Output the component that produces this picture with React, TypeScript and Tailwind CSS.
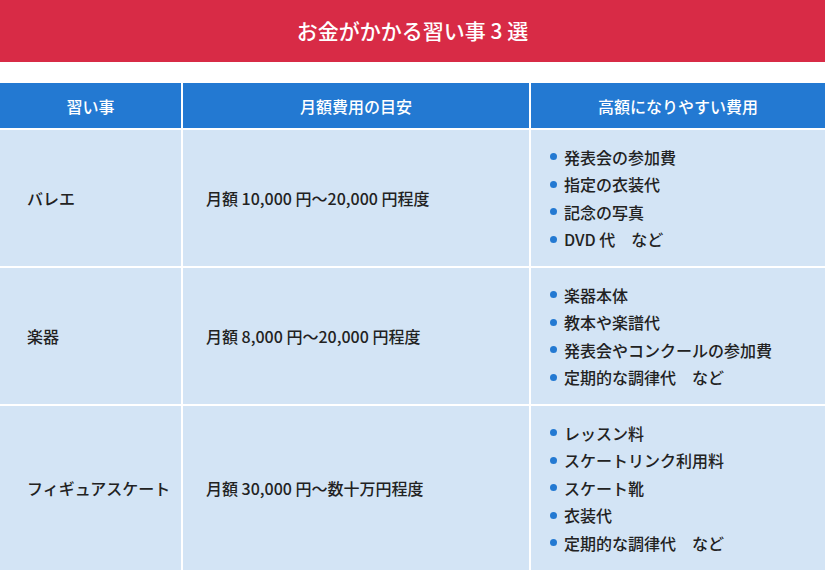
import React from 'react';

const rows = [
  {
    name: 'バレエ',
    cost: '月額 10,000 円〜20,000 円程度',
    items: ['発表会の参加費', '指定の衣装代', '記念の写真', 'DVD 代　など'],
  },
  {
    name: '楽器',
    cost: '月額 8,000 円〜20,000 円程度',
    items: ['楽器本体', '教本や楽譜代', '発表会やコンクールの参加費', '定期的な調律代　など'],
  },
  {
    name: 'フィギュアスケート',
    cost: '月額 30,000 円〜数十万円程度',
    items: ['レッスン料', 'スケートリンク利用料', 'スケート靴', '衣装代', '定期的な調律代　など'],
  },
];

const App = () => {
  return (
    <div
      className="w-[825px] h-[573px] overflow-hidden bg-white text-[#222]"
      style={{ fontFamily: '"Noto Sans CJK JP", "Noto Sans", sans-serif' }}
    >
      <div className="h-[62px] bg-[#d82b46] flex items-center justify-center">
        <h1 className="text-white text-[21px] font-medium">お金がかかる習い事 3 選</h1>
      </div>

      <div className="mt-[21px] grid grid-cols-[181px_346px_1fr] gap-[2px] bg-white">
        <div className="h-[45px] bg-[#2379d2] text-white text-[16px] font-medium flex items-center justify-center">習い事</div>
        <div className="h-[45px] bg-[#2379d2] text-white text-[16px] font-medium flex items-center justify-center">月額費用の目安</div>
        <div className="h-[45px] bg-[#2379d2] text-white text-[16px] font-medium flex items-center justify-center">高額になりやすい費用</div>

        {rows.map((row) => (
          <React.Fragment key={row.name}>
            <div className="bg-[#d3e4f5] flex items-center pl-[27px] text-[16px] font-medium">{row.name}</div>
            <div className="bg-[#d3e4f5] flex items-center pl-[23px] text-[16px] font-medium">{row.cost}</div>
            <div className="bg-[#d3e4f5] pl-[19px] py-[13px]">
              <ul>
                {row.items.map((item) => (
                  <li key={item} className="flex items-center h-[27.5px] text-[16px] font-medium">
                    <span className="w-[7px] h-[7px] rounded-full bg-[#2379d2] mr-[7px] shrink-0" />
                    {item}
                  </li>
                ))}
              </ul>
            </div>
          </React.Fragment>
        ))}
      </div>
    </div>
  );
};

export default App;
